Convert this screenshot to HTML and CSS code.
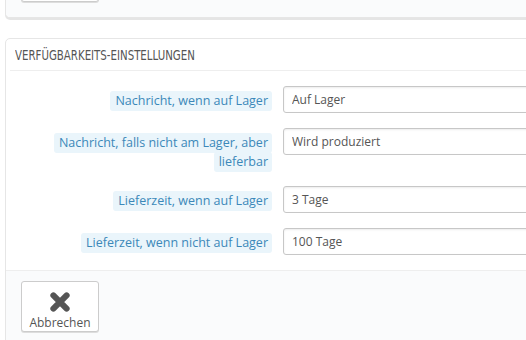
FILE: index.html
```html
<!DOCTYPE html>
<html lang="de">
<head>
  <meta charset="UTF-8" />
  <title>Verfügbarkeits-Einstellungen</title>
  <link rel="stylesheet" href="styles.css">
</head>
<body>
  <div class="panel cut">
    <div class="panel-footer">
      <button class="btn">
        <svg class="icon-cancel" viewBox="0 0 20 20"><path d="M4 4 L16 16 M16 4 L4 16"/></svg>
        <span>Abbrechen</span>
      </button>
    </div>
  </div>

  <div class="panel">
    <div class="panel-heading"><span>Verfügbarkeits-Einstellungen</span></div>

    <div class="form-group">
      <label class="control-label"><span class="label-tooltip">Nachricht, wenn auf Lager</span></label>
      <input class="form-control" type="text" value="Auf Lager">
    </div>
    <div class="form-group">
      <label class="control-label"><span class="label-tooltip">Nachricht, falls nicht am Lager, aber lieferbar</span></label>
      <input class="form-control" type="text" value="Wird produziert">
    </div>
    <div class="form-group">
      <label class="control-label"><span class="label-tooltip">Lieferzeit, wenn auf Lager</span></label>
      <input class="form-control" type="text" value="3 Tage">
    </div>
    <div class="form-group">
      <label class="control-label"><span class="label-tooltip">Lieferzeit, wenn nicht auf Lager</span></label>
      <input class="form-control" type="text" value="100 Tage">
    </div>

    <div class="panel-footer">
      <button class="btn">
        <svg class="icon-cancel" viewBox="0 0 20 20"><path d="M4 4 L16 16 M16 4 L4 16"/></svg>
        <span>Abbrechen</span>
      </button>
    </div>
  </div>
</body>
</html>
```

FILE: styles.css
```css
html, body { margin: 0; background: #fff; overflow: hidden; }
body {
  font-family: "Open Sans", "DejaVu Sans", sans-serif;
  font-size: 12px;
  color: #555;
  padding-left: 5px;
}

.panel {
  width: 700px;
  background: #fff;
  border: 1px solid #e6e6e6;
  border-radius: 5px;
  box-shadow: 0 2px 0 rgba(0,0,0,0.1);
  padding: 20px 20px 0 20px;
  margin-bottom: 20px;
  box-sizing: border-box;
}
.panel.cut { padding: 0; margin-top: -60px; }
.panel.cut .panel-footer { margin: 0; padding-bottom: 15px; border-top: none; }

.panel-heading {
  font-family: "DejaVu Sans", sans-serif;
  font-size: 14px;
  text-transform: uppercase;
  color: #555;
  height: 31px;
  line-height: 32px;
  margin: -20px -16px 15px -16px;
  padding-left: 5px;
  border-bottom: 1px solid #eee;
}
/* narrow the heading, close to the condensed face of the original */
.panel-heading span {
  display: inline-block;
  transform: scaleX(0.73);
  transform-origin: left center;
}

.form-group {
  display: grid;
  grid-template-columns: 246px 1fr;
  column-gap: 11px;
  align-items: start;
  margin-bottom: 15px;
}
.control-label {
  text-align: right;
  padding-top: 5px;
  line-height: 19px;
  font-size: 12.5px;
}
.label-tooltip {
  background: #eaf5fb;
  color: #3b88b9;
  padding: 1px 4px 2px 5px;
  border-radius: 3px;
  -webkit-box-decoration-break: clone;
  box-decoration-break: clone;
}
.form-control {
  height: 27px;
  box-sizing: border-box;
  border: 1px solid #c7c7c7;
  border-radius: 3px;
  box-shadow: inset 0 1px 2px rgba(0,0,0,0.08);
  padding: 0 8px;
  font-family: "Open Sans", sans-serif;
  font-size: 12px;
  color: #555;
  background: #fff;
}

.panel-footer {
  margin: 15px -20px 0 -20px;
  padding: 10px 15px 11px;
  background: #fafbfc;
  border-top: 1px solid #eee;
  border-radius: 0 0 4px 4px;
  height: 73px;
  box-sizing: border-box;
}
.panel.cut .panel-footer { height: auto; }

.btn {
  width: 78px;
  height: 51px;
  background: #fff;
  border: 1px solid #ccc;
  border-radius: 3px;
  box-shadow: 0 1px 0 #ddd;
  padding: 9px 0 0;
  display: flex;
  flex-direction: column;
  align-items: center;
  font-family: "Open Sans", sans-serif;
  font-size: 12px;
  color: #555;
  box-sizing: border-box;
}
.icon-cancel {
  width: 22px;
  height: 22px;
  stroke: #555;
  stroke-width: 5.5;
  stroke-linecap: round;
  fill: none;
}
.btn span { line-height: 16px; margin-top: 2px; }
```
